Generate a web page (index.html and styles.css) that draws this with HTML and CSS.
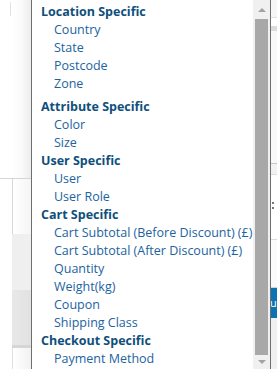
FILE: index.html
```html
<!DOCTYPE html>
<html>
<head>
<meta charset="utf-8">
<link rel="stylesheet" href="styles.css">
</head>
<body>
<div class="page">
  <div class="left">
    <div class="l-top"><div class="l-line"></div><div class="l-panel"></div></div>
    <div class="l-box"></div>
    <div class="l-grey"></div>
    <div class="l-dark"></div>
    <div class="l-white"></div>
  </div>
  <div class="mid"></div>
  <div class="right">
    <div class="r-a"></div>
    <div class="r-b"></div>
    <div class="r-c"><span class="dot"></span><span class="dot"></span></div>
    <div class="r-d"></div>
    <div class="r-btn">u</div>
    <div class="r-e"></div>
  </div>
</div>

<div class="dropdown">
  <ul class="list">
    <li class="grp">Location Specific</li>
    <li class="opt">Country</li>
    <li class="opt">State</li>
    <li class="opt">Postcode</li>
    <li class="opt">Zone</li>
    <li class="grp gap">Attribute Specific</li>
    <li class="opt">Color</li>
    <li class="opt">Size</li>
    <li class="grp">User Specific</li>
    <li class="opt">User</li>
    <li class="opt">User Role</li>
    <li class="grp">Cart Specific</li>
    <li class="opt">Cart Subtotal (Before Discount) (£)</li>
    <li class="opt">Cart Subtotal (After Discount) (£)</li>
    <li class="opt">Quantity</li>
    <li class="opt">Weight(kg)</li>
    <li class="opt">Coupon</li>
    <li class="opt">Shipping Class</li>
    <li class="grp">Checkout Specific</li>
    <li class="opt">Payment Method</li>
  </ul>
  <div class="scrollbar">
    <div class="arrow up"></div>
    <div class="thumb"></div>
    <div class="arrow down"></div>
  </div>
</div>
</body>
</html>
```
FILE: styles.css
```css
html, body {
  margin: 0;
  padding: 0;
}
body {
  width: 277px;
  height: 369px;
  overflow: hidden;
  position: relative;
  background: #fff;
  font-family: "Open Sans", "Noto Sans", sans-serif;
}
.page {
  display: flex;
  height: 369px;
}
.left {
  width: 31px;
  display: flex;
  flex-direction: column;
}
.l-top {
  height: 179px;
  display: flex;
  border-bottom: 1px solid #d4d4d4;
  box-sizing: border-box;
}
.l-line {
  width: 1px;
  margin-left: 10px;
  margin-top: 2px;
  height: 14px;
  background: #e2e2e2;
}
.l-panel {
  flex: 1;
  margin-left: 1px;
  background: linear-gradient(to right, #fff 0%, #fafafa 50%, #ececec 100%);
}
.l-box {
  height: 55px;
  margin-left: 12px;
  border-left: 1px solid #d8d8d8;
  background: linear-gradient(to right, #fff 0%, #f5f5f5 100%);
}
.l-grey {
  height: 56px;
  margin-left: 12px;
  background: #efefef;
}
.l-dark {
  height: 55px;
  margin-left: 12px;
  background: linear-gradient(to right, #e8e8e8 0%, #e2e2e2 100%);
  border-bottom: 3px solid #d6d6d6;
}
.l-white {
  flex: 1;
  margin-left: 12px;
  border-left: 1px solid #e0e0e0;
  background: linear-gradient(to right, #fff 0%, #f2f2f2 100%);
}
.mid {
  width: 239px;
}
.right {
  width: 7px;
  display: flex;
  flex-direction: column;
  background: #f6f6f6;
}
.r-a {
  border-left: 1px solid #cfcfcf;
  border-top: 1px solid #e0e0e0;
  margin-top: 17px;
  background: linear-gradient(#fff 0 8px, #dcdcdc 8px 13px, #f8f8f8 13px);
  box-sizing: border-box;
  height: 146px;
}
.r-b {
  height: 10px;
  border-top: 1px solid #c8c8c8;
  border-bottom: 1px solid #dedede;
  background: #f2f2f2;
}
.r-c {
  height: 65px;
  border-bottom: 1px solid #dcdcdc;
  background: #fff;
  padding: 27px 0 0 2px;
  box-sizing: border-box;
  display: flex;
  flex-direction: column;
  gap: 3px;
}
.dot {
  width: 2px;
  height: 2px;
  background: #777;
}
.r-d {
  height: 47px;
  border-bottom: 1px solid #d2d2d2;
  background: #fafafa;
}
.r-btn {
  height: 30px;
  background: #0d72b1;
  color: #fff;
  font-size: 11px;
  line-height: 30px;
  overflow: hidden;
}
.r-e {
  flex: 1;
  background: #f0f0f0;
}

.dropdown {
  position: absolute;
  left: 31px;
  top: 0;
  width: 238px;
  height: 380px;
  border-left: 1px solid #6e6e6e;
  border-right: 1px solid #6e6e6e;
  background: #fff;
  display: flex;
}
.list {
  flex: 1;
  list-style: none;
  margin: 0;
  padding: 3px 0 0 0;
}
.list li {
  height: 18px;
  line-height: 18px;
  white-space: nowrap;
  font-size: 12.5px;
}
.grp {
  font-weight: 700;
  color: #0f4f7c;
  padding-left: 9px;
}
.grp.gap {
  margin-top: 5px;
}
.opt {
  color: #1c63a0;
  padding-left: 22px;
}
.scrollbar {
  width: 17px;
  background: #f0f0f0;
  display: flex;
  flex-direction: column;
  align-items: center;
}
.arrow {
  width: 0;
  height: 0;
  border-left: 4px solid transparent;
  border-right: 4px solid transparent;
}
.arrow.up {
  margin-top: 8px;
  border-bottom: 4px solid #a3a3a3;
}
.thumb {
  margin-top: 7px;
  width: 13px;
  height: 336px;
  background: #a8a8a8;
}
.arrow.down {
  margin-top: 5px;
  border-top: 4px solid #a3a3a3;
}
```
